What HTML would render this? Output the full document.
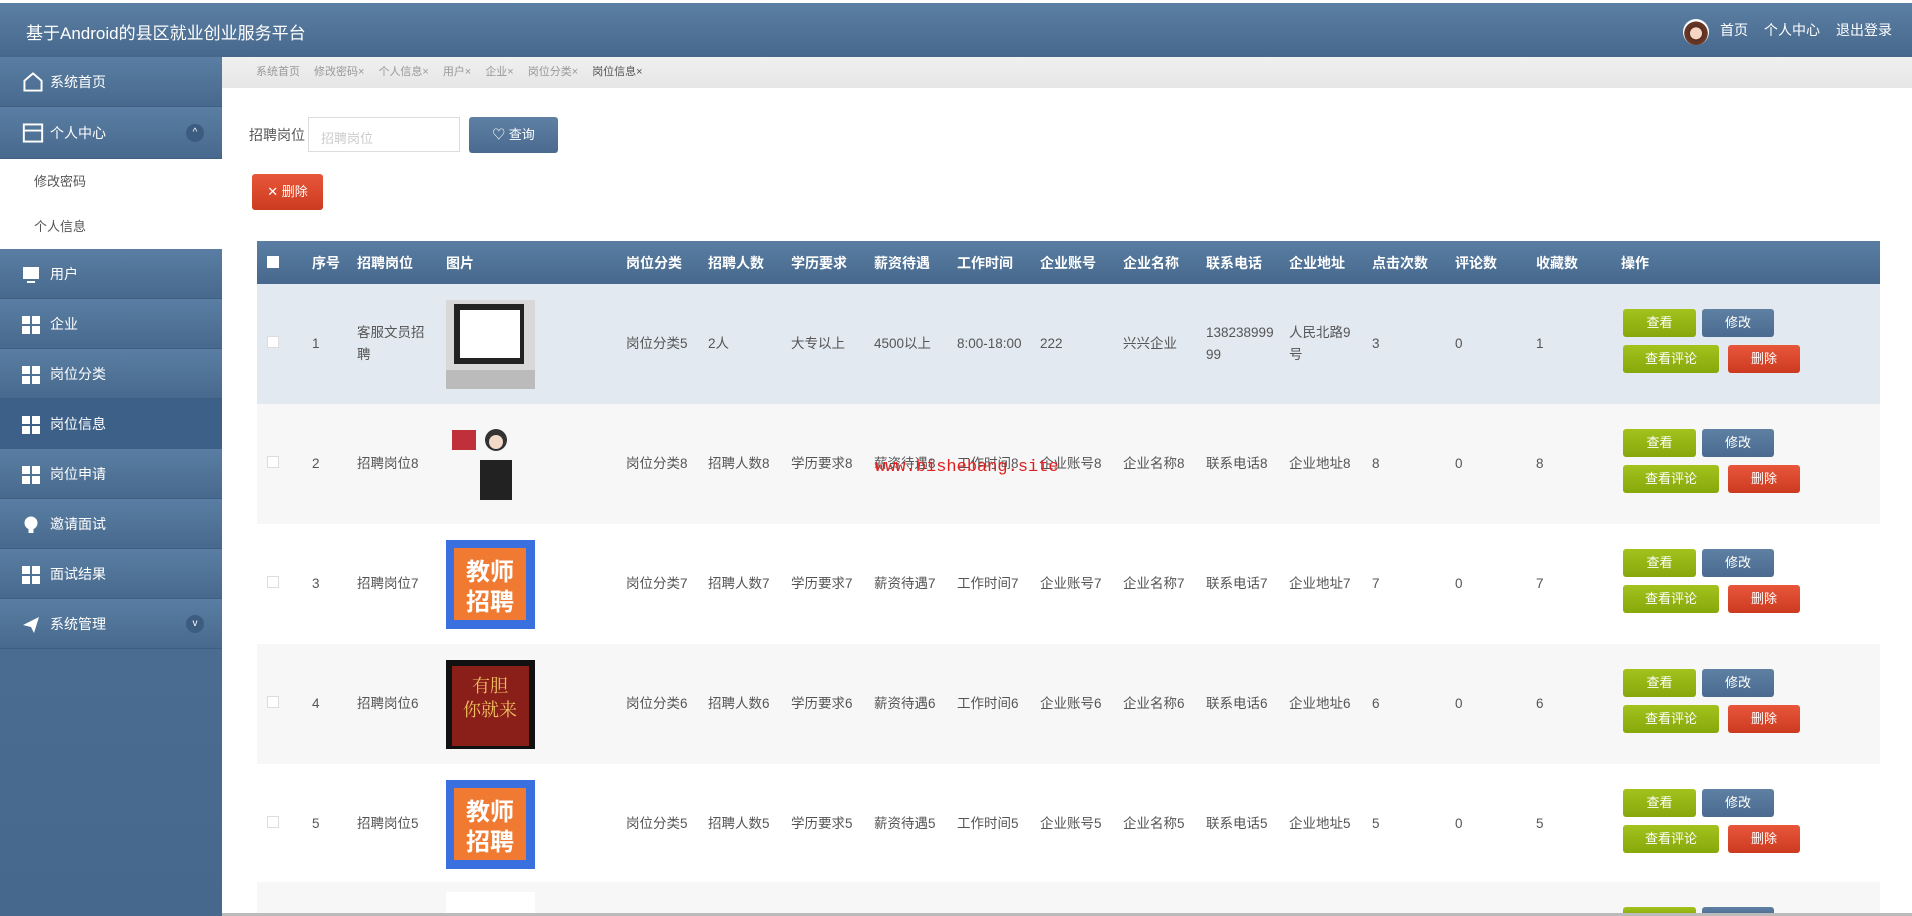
<!DOCTYPE html>
<html style="overflow:hidden;height:916px"><head><meta charset="utf-8">
<style>
*{box-sizing:border-box;margin:0;padding:0}
body{width:1912px;height:916px;overflow:hidden;background:#fff;font-family:"Liberation Sans","Noto Sans CJK SC",sans-serif;font-size:14px;color:#555;position:relative}
#wrap{position:absolute;left:0;top:0;width:1912px;height:916px;overflow:hidden}
.top{position:absolute;left:0;top:3px;width:1912px;height:54px;background:linear-gradient(#5b7fa3,#46688c);color:#fff}
.top .t{position:absolute;left:26px;top:16px;font-size:17px}
.top .r{position:absolute;right:20px;top:17px;font-size:14px}
.top .r span{margin-left:16px}
.av{position:absolute;left:1683px;top:16px;width:26px;height:26px;border-radius:50%;background:radial-gradient(circle at 50% 55%,#f5d6c4 30%,#5a2e20 32%,#6b3a28 60%,#fff 62%)}
.side{position:absolute;left:0;top:57px;width:222px;height:859px;background:linear-gradient(#52759a,#46688c)}
.it{height:50px;background:linear-gradient(#5a7ea3,#47698d);border-bottom:1px solid #3f5f82;color:#fff;font-size:14px;line-height:50px;padding-left:50px;position:relative}
.it.act{background:#3d6088}
.it .ic{position:absolute;left:22px;top:17px;width:18px;height:18px}
.g{display:grid;grid-template-columns:8px 8px;gap:2px}
.g i{background:#fff;display:block;height:8px}
.sub{background:#fff;height:45px;line-height:45px;padding-left:34px;color:#555;font-size:13px}
.crumb{position:absolute;left:222px;top:57px;width:1690px;height:31px;background:linear-gradient(#f0f0f0,#e6e6e6);font-size:11px;color:#999;padding-left:34px;line-height:31px}
.crumb span{margin-right:14px}
.lbl{position:absolute;left:249px;top:125px;font-size:14px}
.inp{position:absolute;left:308px;top:117px;width:152px;height:35px;border:1px solid #ddd;font-size:13px;color:#ccc;padding:10px 12px}
.btn{position:absolute;color:#fff;border-radius:3px;text-align:center;font-size:13px}
table{position:absolute;left:257px;top:241px;width:1623px;border-collapse:collapse;table-layout:fixed}
th{height:43px;background:linear-gradient(#5a7ea3,#46688c);color:#fff;text-align:left;font-size:14px;font-weight:bold}
td{height:120px;font-size:13.5px;vertical-align:middle;line-height:22px}
tr.a td{background:#e2e9f0}
tr.b td{background:#f7f7f7}
tr.c td{background:#fff}
.cb{display:inline-block;width:12px;height:12px;border:1px solid #ddd;background:#fff;margin-left:10px}
.pic{width:89px;height:89px;display:block}
.ops{position:relative;height:70px}
.ops div{position:absolute;height:28px;line-height:28px;color:#fff;text-align:center;border-radius:3px;font-size:13px}
.gr{background:linear-gradient(#a3c21e,#86a80a)}
.bl{background:linear-gradient(#5e80a3,#4a6b8f)}
.rd{background:linear-gradient(#e8573a,#cc3b1f)}
.wm{position:absolute;left:875px;top:458px;color:#e02020;font-family:"Liberation Mono",monospace;font-size:17px}
</style></head><body><div id="wrap">
<div class="top"><div class="t">基于Android的县区就业创业服务平台</div><div class="av"></div><div class="r"><span>首页</span><span>个人中心</span><span>退出登录</span></div></div>
<div class="side">
<div class="it"><svg class="ic" viewBox="0 0 18 18" style="top:14px;width:22px;height:22px"><path d="M2 8L9 2l7 6v8H2z" fill="none" stroke="#fff" stroke-width="1.6"/></svg>系统首页</div>
<div class="it" style="height:52px;line-height:52px"><svg class="ic" viewBox="0 0 18 18" style="top:15px;width:22px;height:22px"><rect x="1.5" y="2" width="15" height="14" fill="none" stroke="#fff" stroke-width="1.6"/><path d="M1.5 7h15" stroke="#fff" stroke-width="1.6"/></svg>个人中心<span style="position:absolute;left:186px;top:17px;width:18px;height:18px;border-radius:50%;background:#3c5c80;font-size:10px;line-height:18px;text-align:center">^</span></div>
<div class="sub">修改密码</div><div class="sub">个人信息</div>
<div class="it"><svg class="ic" viewBox="0 0 18 18"><rect x="1" y="1" width="16" height="12" fill="#fff"/><rect x="5" y="15" width="8" height="2" fill="#fff"/></svg>用户</div>
<div class="it"><div class="ic g"><i></i><i></i><i></i><i></i></div>企业</div>
<div class="it"><div class="ic g"><i></i><i></i><i></i><i></i></div>岗位分类</div>
<div class="it act"><div class="ic g"><i></i><i></i><i></i><i></i></div>岗位信息</div>
<div class="it"><div class="ic g"><i></i><i></i><i></i><i></i></div>岗位申请</div>
<div class="it"><svg class="ic" viewBox="0 0 18 18"><circle cx="9" cy="7" r="6.5" fill="#fff"/><rect x="6.5" y="13" width="5" height="4" fill="#fff"/></svg>邀请面试</div>
<div class="it"><div class="ic g"><i></i><i></i><i></i><i></i></div>面试结果</div>
<div class="it"><svg class="ic" viewBox="0 0 18 18"><path d="M1 9L17 1 12 17 9 11z" fill="#fff"/></svg>系统管理<span style="position:absolute;left:186px;top:16px;width:18px;height:18px;border-radius:50%;background:#3c5c80;font-size:10px;line-height:18px;text-align:center">v</span></div>
</div>
<div class="crumb"><span>系统首页</span><span>修改密码×</span><span>个人信息×</span><span>用户×</span><span>企业×</span><span>岗位分类×</span><span style="color:#555">岗位信息×</span></div>
<div class="lbl">招聘岗位</div><div class="inp">招聘岗位</div>
<div class="btn bl" style="left:469px;top:117px;width:89px;height:36px;line-height:36px">♡ 查询</div>
<div class="btn rd" style="left:252px;top:174px;width:71px;height:36px;line-height:36px">✕ 删除</div>
<table>
<colgroup><col style="width:55px"><col style="width:45px"><col style="width:89px"><col style="width:180px"><col style="width:82px"><col style="width:83px"><col style="width:83px"><col style="width:83px"><col style="width:83px"><col style="width:83px"><col style="width:83px"><col style="width:83px"><col style="width:83px"><col style="width:83px"><col style="width:81px"><col style="width:85px"><col style="width:259px"></colgroup>
<tr><th><span class="cb" style="border:none"></span></th><th>序号</th><th>招聘岗位</th><th>图片</th><th>岗位分类</th><th>招聘人数</th><th>学历要求</th><th>薪资待遇</th><th>工作时间</th><th>企业账号</th><th>企业名称</th><th>联系电话</th><th>企业地址</th><th>点击次数</th><th>评论数</th><th>收藏数</th><th>操作</th></tr>
<tr class="a"><td><span class="cb"></span></td><td>1</td><td style="padding-right:10px">客服文员招聘</td><td><svg class="pic" viewBox="0 0 89 89"><rect width="89" height="89" fill="#d8d8d8"/><rect x="8" y="4" width="70" height="60" fill="#222"/><rect x="14" y="10" width="60" height="48" fill="#fff"/><path d="M0 70h89v19H0z" fill="#bbb"/></svg></td><td>岗位分类5</td><td>2人</td><td>大专以上</td><td>4500以上</td><td>8:00-18:00</td><td>222</td><td>兴兴企业</td><td style="word-break:break-all;padding-right:12px">13823899999</td><td style="padding-right:15px">人民北路9号</td><td>3</td><td>0</td><td>1</td><td><div class="ops"><div class="gr" style="left:2px;top:0;width:73px">查看</div><div class="bl" style="left:81px;top:0;width:72px">修改</div><div class="gr" style="left:2px;top:36px;width:96px">查看评论</div><div class="rd" style="left:107px;top:36px;width:72px">删除</div></div></td></tr>
<tr class="b"><td><span class="cb"></span></td><td>2</td><td>招聘岗位8</td><td><svg class="pic" viewBox="0 0 89 89"><rect x="6" y="10" width="24" height="20" fill="#c0303a"/><circle cx="50" cy="20" r="11" fill="#333"/><path d="M34 40h32v40H34z" fill="#222"/><circle cx="50" cy="22" r="7" fill="#f3d9c8"/></svg></td><td>岗位分类8</td><td>招聘人数8</td><td>学历要求8</td><td>薪资待遇8</td><td>工作时间8</td><td>企业账号8</td><td>企业名称8</td><td>联系电话8</td><td>企业地址8</td><td>8</td><td>0</td><td>8</td><td><div class="ops"><div class="gr" style="left:2px;top:0;width:73px">查看</div><div class="bl" style="left:81px;top:0;width:72px">修改</div><div class="gr" style="left:2px;top:36px;width:96px">查看评论</div><div class="rd" style="left:107px;top:36px;width:72px">删除</div></div></td></tr>
<tr class="c"><td><span class="cb"></span></td><td>3</td><td>招聘岗位7</td><td><svg class="pic" viewBox="0 0 89 89"><rect width="89" height="89" fill="#3a6fe0"/><rect x="8" y="8" width="72" height="72" fill="#f07a32"/><text x="44" y="40" fill="#fff" font-size="24" font-weight="bold" text-anchor="middle" font-family="Noto Sans CJK SC">教师</text><text x="44" y="70" fill="#fff" font-size="24" font-weight="bold" text-anchor="middle" font-family="Noto Sans CJK SC">招聘</text></svg></td><td>岗位分类7</td><td>招聘人数7</td><td>学历要求7</td><td>薪资待遇7</td><td>工作时间7</td><td>企业账号7</td><td>企业名称7</td><td>联系电话7</td><td>企业地址7</td><td>7</td><td>0</td><td>7</td><td><div class="ops"><div class="gr" style="left:2px;top:0;width:73px">查看</div><div class="bl" style="left:81px;top:0;width:72px">修改</div><div class="gr" style="left:2px;top:36px;width:96px">查看评论</div><div class="rd" style="left:107px;top:36px;width:72px">删除</div></div></td></tr>
<tr class="b"><td><span class="cb"></span></td><td>4</td><td>招聘岗位6</td><td><svg class="pic" viewBox="0 0 89 89"><rect width="89" height="89" fill="#111"/><rect x="6" y="6" width="77" height="80" fill="#8a1f1a"/><text x="44" y="32" fill="#f0c060" font-size="18" text-anchor="middle" font-family="Noto Serif CJK SC">有胆</text><text x="44" y="56" fill="#f0c060" font-size="18" text-anchor="middle" font-family="Noto Serif CJK SC">你就来</text></svg></td><td>岗位分类6</td><td>招聘人数6</td><td>学历要求6</td><td>薪资待遇6</td><td>工作时间6</td><td>企业账号6</td><td>企业名称6</td><td>联系电话6</td><td>企业地址6</td><td>6</td><td>0</td><td>6</td><td><div class="ops"><div class="gr" style="left:2px;top:0;width:73px">查看</div><div class="bl" style="left:81px;top:0;width:72px">修改</div><div class="gr" style="left:2px;top:36px;width:96px">查看评论</div><div class="rd" style="left:107px;top:36px;width:72px">删除</div></div></td></tr>
<tr class="c"><td><span class="cb"></span></td><td>5</td><td>招聘岗位5</td><td><svg class="pic" viewBox="0 0 89 89"><rect width="89" height="89" fill="#3a6fe0"/><rect x="8" y="8" width="72" height="72" fill="#f07a32"/><text x="44" y="40" fill="#fff" font-size="24" font-weight="bold" text-anchor="middle" font-family="Noto Sans CJK SC">教师</text><text x="44" y="70" fill="#fff" font-size="24" font-weight="bold" text-anchor="middle" font-family="Noto Sans CJK SC">招聘</text></svg></td><td>岗位分类5</td><td>招聘人数5</td><td>学历要求5</td><td>薪资待遇5</td><td>工作时间5</td><td>企业账号5</td><td>企业名称5</td><td>联系电话5</td><td>企业地址5</td><td>5</td><td>0</td><td>5</td><td><div class="ops"><div class="gr" style="left:2px;top:0;width:73px">查看</div><div class="bl" style="left:81px;top:0;width:72px">修改</div><div class="gr" style="left:2px;top:36px;width:96px">查看评论</div><div class="rd" style="left:107px;top:36px;width:72px">删除</div></div></td></tr>
</table>
<div style="position:absolute;left:257px;top:882px;width:1623px;height:34px;background:#f7f7f7"></div>
<div style="position:absolute;left:446px;top:892px;width:89px;height:24px;background:#fff"></div>
<div class="gr" style="position:absolute;left:1623px;top:907px;width:73px;height:9px;border-radius:3px 3px 0 0"></div>
<div class="bl" style="position:absolute;left:1702px;top:907px;width:72px;height:9px;border-radius:3px 3px 0 0"></div>
<div class="wm">www.bishebang.site</div>
<div style="position:absolute;left:222px;top:913px;width:1690px;height:3px;background:#bbb"></div>
</div></body></html>
